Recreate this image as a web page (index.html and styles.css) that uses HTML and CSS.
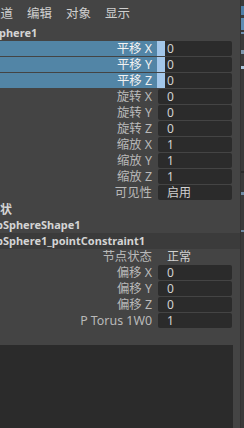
FILE: index.html
```html
<!DOCTYPE html>
<html lang="zh">
<head>
<meta charset="utf-8">
<link rel="stylesheet" href="styles.css">
</head>
<body>
<div class="app">
  <div class="main">
    <nav class="menubar">
      <span class="menu first">通道</span>
      <span class="menu">编辑</span>
      <span class="menu">对象</span>
      <span class="menu">显示</span>
    </nav>
    <div class="heading far">pSphere1</div>
    <div class="row sel"><span class="label">平移 X</span><span class="field">0</span></div>
    <div class="row sel"><span class="label">平移 Y</span><span class="field">0</span></div>
    <div class="row sel"><span class="label">平移 Z</span><span class="field">0</span></div>
    <div class="row"><span class="label">旋转 X</span><span class="field">0</span></div>
    <div class="row"><span class="label">旋转 Y</span><span class="field">0</span></div>
    <div class="row"><span class="label">旋转 Z</span><span class="field">0</span></div>
    <div class="row"><span class="label">缩放 X</span><span class="field">1</span></div>
    <div class="row"><span class="label">缩放 Y</span><span class="field">1</span></div>
    <div class="row"><span class="label">缩放 Z</span><span class="field">1</span></div>
    <div class="row"><span class="label">可见性</span><span class="field">启用</span></div>
    <div class="heading cjk">形状</div>
    <div class="heading near">pSphereShape1</div>
    <div class="heading near band">pSphere1_pointConstraint1</div>
    <div class="row"><span class="label">节点状态</span><span class="plain">正常</span></div>
    <div class="row"><span class="label">偏移 X</span><span class="field">0</span></div>
    <div class="row"><span class="label">偏移 Y</span><span class="field">0</span></div>
    <div class="row"><span class="label">偏移 Z</span><span class="field">0</span></div>
    <div class="row"><span class="label">P Torus 1W0</span><span class="field">1</span></div>
    <div class="spacer"></div>
    <div class="outbox"></div>
  </div>
  <div class="strip">
    <span class="tick t1"></span>
    <span class="tick t2"></span>
    <span class="tick t3"></span>
    <span class="tick t4"></span>
    <span class="tick t5"></span>
    <span class="sep"></span>
    <span class="tick t6"></span>
    <span class="tick t7"></span>
  </div>
</div>
</body>
</html>
```

FILE: styles.css
```css
* { box-sizing: border-box; }
html, body {
  margin: 0;
  padding: 0;
  background: #444444;
  width: 244px;
  height: 428px;
  overflow: hidden;
}
body {
  font-family: "Noto Sans", "Noto Sans CJK SC", sans-serif;
  font-size: 12px;
  color: #bdbdbd;
}
.app {
  display: flex;
  height: 428px;
}
.main {
  width: 240px;
  display: flex;
  flex-direction: column;
  overflow: hidden;
}
.menubar {
  height: 25px;
  display: flex;
  align-items: center;
  gap: 14px;
  font-family: "Noto Sans CJK SC", sans-serif;
  font-size: 12.5px;
  color: #cfcfcf;
  white-space: nowrap;
}
.menu.first { margin-left: -12px; }
.heading {
  height: 16px;
  line-height: 16px;
  font-size: 11px;
  font-weight: bold;
  color: #d4d4d4;
  white-space: nowrap;
}
.heading.far { margin-left: -14px; }
.heading.near { margin-left: -4px; }
.heading.cjk { font-family: "Noto Sans CJK SC", sans-serif; font-size: 12px; margin-left: -12px; }
.heading.band {
  background: #3b3b3b;
}
.row {
  height: 16px;
  display: flex;
  align-items: stretch;
  padding-bottom: 1px;
  padding-right: 8px;
}
.label {
  width: 158px;
  padding-right: 6px;
  text-align: right;
  line-height: 15px;
  font-size: 12.4px;
  white-space: nowrap;
  color: #b9b9b9;
}
.row.sel .label {
  background: #5285a6;
  color: #f2f2f2;
  width: 157px;
  padding-right: 5px;
}
.field {
  flex: 1;
  background: #2b2b2b;
  border-radius: 2px;
  padding-left: 9px;
  line-height: 15px;
  color: #d2d2d2;
}
.row.sel .field {
  border-left: 8px solid #a3c7ea;
  border-radius: 0 2px 2px 0;
  padding-left: 2px;
}
.plain {
  flex: 1;
  padding-left: 9px;
  line-height: 15px;
  color: #d2d2d2;
}
.spacer { height: 16px; }
.outbox {
  flex: 1;
  background: #2b2b2b;
  margin-right: 7px;
}
.strip {
  width: 4px;
  position: relative;
  background: #3a3a3a;
  border-left: 1px solid #333333;
}
.tick {
  position: absolute;
  left: 0;
  width: 3px;
  background: #5a86aa;
}
.t1 { top: 6px; height: 9px; background: #4e7fa8; }
.t2 { top: 18px; height: 12px; background: #5d8cb3; }
.t3 { top: 32px; height: 2px; background: #6f8fb0; }
.t4 { top: 50px; height: 4px; background: #7d96ac; }
.t5 { top: 66px; height: 3px; background: #a9c3d9; }
.sep {
  position: absolute;
  left: 0;
  top: 171px;
  width: 3px;
  height: 2px;
  background: #2a2a2a;
}
.t6 { top: 192px; height: 3px; background: #6d8aa3; }
.t7 { top: 230px; height: 2px; background: #6d8aa3; }
```
